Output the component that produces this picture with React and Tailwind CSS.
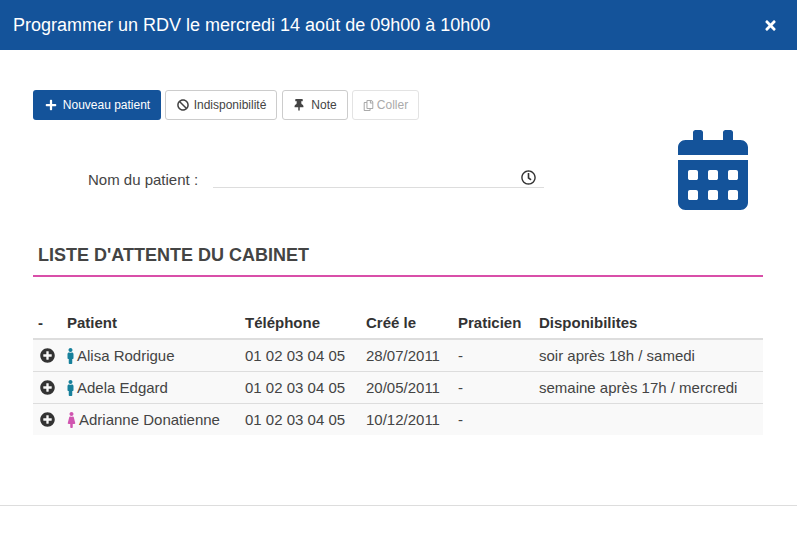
import React from "react";
import { FaPlus, FaBan, FaThumbtack, FaRegCopy, FaRegClock, FaCalendarAlt, FaPlusCircle, FaMale, FaFemale, FaTimes } from "react-icons/fa";

const rows = [
  { name: "Alisa Rodrigue", g: "m", tel: "01 02 03 04 05", date: "28/07/2011", pr: "-", dispo: "soir après 18h / samedi" },
  { name: "Adela Edgard", g: "m", tel: "01 02 03 04 05", date: "20/05/2011", pr: "-", dispo: "semaine après 17h / mercredi" },
  { name: "Adrianne Donatienne", g: "f", tel: "01 02 03 04 05", date: "10/12/2011", pr: "-", dispo: "" },
];

export default function App() {
  return (
    <div className="w-[797px] h-[544px] bg-white overflow-hidden font-['Liberation_Sans',Arial,sans-serif] text-[#333]">
      <header className="h-[50px] bg-[#14539a] text-white flex items-center justify-between pl-[13px] pr-[19px]">
        <h1 className="text-[18px] leading-none font-normal">Programmer un RDV le mercredi 14 août de 09h00 à 10h00</h1>
        <FaTimes className="text-[15px]" />
      </header>

      <main className="h-[456px] border-b border-[#ddd] pl-[33px] pr-[34px] pt-10">
        <div className="flex gap-1 h-[30px] text-[12px]">
          <button className="w-[128px] flex items-center justify-center gap-[6px] rounded-[3px] bg-[#14539a] text-white pl-[1px]">
            <FaPlus className="text-[12px]" /> Nouveau patient
          </button>
          <button className="w-[112px] flex items-center justify-center gap-[5px] rounded-[3px] border border-[#ccc] bg-white text-[#444] pl-[1px]">
            <FaBan className="text-[12px]" /> Indisponibilité
          </button>
          <button className="w-[66px] ml-[1px] flex items-center justify-center gap-[6px] rounded-[3px] border border-[#ccc] bg-white text-[#444]">
            <FaThumbtack className="text-[12px]" /> Note
          </button>
          <button className="w-[67px] flex items-center justify-center gap-[3px] rounded-[3px] border border-[#e3e3e3] bg-white text-[#aaa]">
            <FaRegCopy className="text-[11px]" /> Coller
          </button>
        </div>

        <div className="flex justify-between pt-[10px] pr-[10px]">
          <div className="flex items-start pt-[40px] pl-[55px]">
            <label className="w-[125px] text-[15px] leading-5 text-[#444]">Nom du patient :</label>
            <div className="w-[331px] h-[20px] -mt-[2px] pt-[2px] border-b border-[#ddd] flex items-start justify-end pr-2">
              <FaRegClock className="text-[15px] text-[#333]" />
            </div>
          </div>
          <FaCalendarAlt className="text-[80px] text-[#14539a]" />
        </div>

        <div className="mt-[34px] h-[33px] border-b-2 border-[#d94fa9] pl-[5px]">
          <h2 className="text-[18px] leading-[22px] font-bold text-[#444]">LISTE D'ATTENTE DU CABINET</h2>
        </div>

        <table className="mt-[33px] w-[730px] table-fixed border-collapse text-[15px]">
          <colgroup>
            <col className="w-[29px]" />
            <col className="w-[178px]" />
            <col className="w-[121px]" />
            <col className="w-[92px]" />
            <col className="w-[81px]" />
            <col className="w-[229px]" />
          </colgroup>
          <thead>
            <tr className="h-[29px] border-b-2 border-[#ddd] text-left">
              <th className="px-[5px] pb-[2px] font-bold text-[#333]">-</th>
              <th className="px-[5px] pb-[2px] font-bold text-[#333]">Patient</th>
              <th className="px-[5px] pb-[2px] font-bold text-[#333]">Téléphone</th>
              <th className="px-[5px] pb-[2px] font-bold text-[#333]">Créé le</th>
              <th className="px-[5px] pb-[2px] font-bold text-[#333]">Praticien</th>
              <th className="px-[5px] pb-[2px] font-bold text-[#333]">Disponibilites</th>
            </tr>
          </thead>
          <tbody>
            {rows.map((r) => (
              <tr key={r.name} className="h-[32px] bg-[#f9f9f9] border-b border-[#ddd] last:border-b-0 text-[#444]">
                <td className="px-[7px]"><FaPlusCircle className="text-[15px] text-[#333]" /></td>
                <td className="px-[5px] pt-[2px]">
                  <span className="flex items-center gap-[3px]">
                    {r.g === "m" ? (
                      <FaMale className="text-[16px] w-[7px] text-[#17809b]" />
                    ) : (
                      <FaFemale className="text-[16px] w-[9px] text-[#d055b0]" />
                    )}
                    {r.name}
                  </span>
                </td>
                <td className="px-[5px] pt-[2px]">{r.tel}</td>
                <td className="px-[5px] pt-[2px]">{r.date}</td>
                <td className="px-[5px] pt-[2px]">{r.pr}</td>
                <td className="px-[5px] pt-[2px]">{r.dispo}</td>
              </tr>
            ))}
          </tbody>
        </table>
      </main>
    </div>
  );
}
